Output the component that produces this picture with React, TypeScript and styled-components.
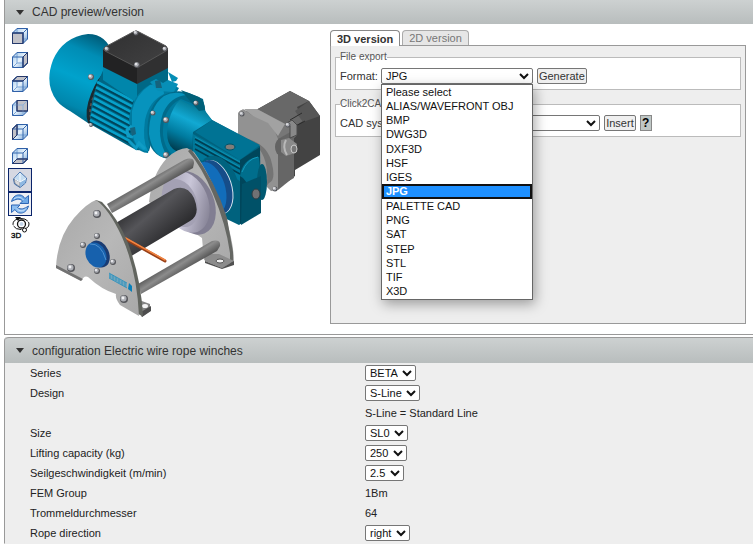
import React, { useState } from 'react';
import styled, { createGlobalStyle, css } from 'styled-components';

const GlobalStyle = createGlobalStyle`
  * { box-sizing: border-box; }
  body {
    margin: 0;
    background: #fff;
    color: #222;
    font: 11px/14px "Liberation Sans", Arial, sans-serif;
  }
  button, select { font: inherit; color: inherit; }
`;

const Page = styled.main`
  display: flex;
  flex-direction: column;
  gap: 2px;
  padding-left: 4px;
  overflow: hidden;
`;

const Section = styled.section<{ $filled?: boolean }>`
  border-left: 1px solid #999;
  border-bottom: 1px solid ${p => (p.$filled ? '#eee' : '#999')};
  background: ${p => (p.$filled ? '#eee' : '#fff')};
  border-top-left-radius: ${p => (p.$filled ? 4 : 0)}px;
`;

const SectionHeader = styled.h2<{ $rounded?: boolean }>`
  display: flex;
  align-items: center;
  gap: 8px;
  height: ${p => (p.$rounded ? 26 : 24)}px;
  margin: 0;
  padding-left: 11px;
  font-size: 12px;
  font-weight: normal;
  color: #333;
  background: linear-gradient(#cdd1d1, #b8bdbd);
  ${p => p.$rounded && css`
    border-top: 1px solid #999;
    border-top-left-radius: 4px;
  `}
`;

const Preview = styled.div`
  display: flex;
  align-items: flex-start;
  min-height: 310px;
  padding: 0 7px 10px 3px;
`;

const Toolbar = styled.div`
  display: flex;
  flex-direction: column;
`;

const ToolButton = styled.button<{ $active?: boolean; $light?: boolean }>`
  display: flex;
  align-items: center;
  justify-content: center;
  width: 24px;
  height: 24px;
  padding: 0;
  border: ${p => (p.$active ? '1px solid #0a246a' : '0')};
  background: ${p => (p.$active ? (p.$light ? '#eef0f5' : '#d6d8e2') : 'transparent')};
`;

const Drawing = styled.svg`
  flex: none;
  width: 280px;
  height: 295px;
  margin: 1px 5px 0 13px;
`;

const Export = styled.div`
  flex: 1;
  display: flex;
  flex-direction: column;
  margin-top: 6px;
`;

const Tabs = styled.div`
  display: flex;
  gap: 2px;
`;

const Tab = styled.button<{ $active?: boolean }>`
  height: 15px;
  padding: 0 6px;
  border: 1px solid #aaa;
  border-bottom: 0;
  border-radius: 4px 4px 0 0;
  background: #e6e6e6;
  color: #777;
  line-height: 14px;
  ${p => p.$active && css`
    position: relative;
    z-index: 1;
    height: 16px;
    margin-bottom: -1px;
    border-color: #888;
    background: #fff;
    color: #333;
    font-weight: bold;
  `}
`;

const TabPanel = styled.div`
  display: flex;
  flex-direction: column;
  gap: 8px;
  min-height: 279px;
  padding: 5px 4px;
  border: 1px solid #999;
  background: #eee;
`;

const Group = styled.fieldset`
  min-width: 0;
  margin: 0;
  padding: 3px 4px 4px;
  border: 1px solid #bbb;
  background: #fff;
`;

const GroupTitle = styled.legend`
  padding: 0;
  color: #555;
  font-size: 10px;
  line-height: 12px;
`;

const Line = styled.div`
  display: flex;
  align-items: center;
  gap: 4px;
  height: 19px;
  color: #333;
`;

const FieldLabel = styled.label`
  margin-right: -1px;
`;

const Picker = styled.select<{ $width?: number }>`
  width: ${p => (p.$width ? p.$width + 'px' : 'auto')};
  height: 16px;
  padding: 0 1px 0 0;
  border: 1px solid #767676;
  border-radius: 2px;
  background-color: #fff;
  color: #111;
`;

const PickerBox = styled.div`
  position: relative;
  display: flex;
`;

const Menu = styled.ul`
  position: absolute;
  z-index: 5;
  top: 16px;
  left: 0;
  display: grid;
  grid-auto-rows: 1fr;
  width: 100%;
  height: 216px;
  margin: 0;
  padding: 0;
  border: 1px solid #666;
  background: #fff;
  box-shadow: 2px 4px 12px rgba(0, 0, 0, 0.35);
  list-style: none;
`;

const MenuItem = styled.li<{ $active: boolean }>`
  display: flex;
  align-items: center;
  padding-left: 4px;
  color: #111;
  ${p => p.$active && css`
    padding-left: 2px;
    border: 2px solid #111;
    background: #1e90ff;
    color: #fff;
    font-weight: bold;
    line-height: 10px;
  `}
`;

const PushButton = styled.button`
  height: 16px;
  padding: 0 1px;
  border: 1px solid #767676;
  border-radius: 2px;
  background: #efefef;
  line-height: 14px;
`;

const HelpButton = styled.button`
  width: 12px;
  height: 16px;
  padding: 0;
  border: 1px solid #888;
  background: #bfc7c5;
  color: #000;
  font-weight: bold;
  font-size: 12px;
  line-height: 14px;
`;

const Settings = styled.div`
  display: flex;
  flex-direction: column;
`;

const Setting = styled.div`
  display: grid;
  grid-template-columns: 335px 1fr;
  align-items: center;
  height: 20px;
  padding-left: 25px;
`;

const formats = ['Please select', 'ALIAS/WAVEFRONT OBJ', 'BMP', 'DWG3D', 'DXF3D', 'HSF', 'IGES', 'JPG',
  'PALETTE CAD', 'PNG', 'SAT', 'STEP', 'STL', 'TIF', 'X3D'];

type SettingData = { label: string; value: string; choice?: boolean };
const settings: SettingData[] = [
  { label: 'Series', value: 'BETA', choice: true },
  { label: 'Design', value: 'S-Line', choice: true },
  { label: '', value: 'S-Line = Standard Line' },
  { label: 'Size', value: 'SL0', choice: true },
  { label: 'Lifting capacity (kg)', value: '250', choice: true },
  { label: 'Seilgeschwindigkeit (m/min)', value: '2.5', choice: true },
  { label: 'FEM Group', value: '1Bm' },
  { label: 'Trommeldurchmesser', value: '64' },
  { label: 'Rope direction', value: 'right', choice: true },
];

const faces: Record<string, string> = {
  Front: '0.5,5 11,5 11,15.5 0.5,15.5',
  Right: '11,5 15.5,0.5 15.5,11 11,15.5',
  Top: '0.5,5 5,0.5 15.5,0.5 11,5',
  Back: '5,0.5 15.5,0.5 15.5,11 5,11',
  Left: '0.5,5 5,0.5 5,11 0.5,15.5',
  Bottom: '0.5,15.5 5,11 15.5,11 11,15.5',
};

function CubeIcon({ face }: { face: string }) {
  const id = 'cube' + face;
  return (
    <svg width="16" height="16" viewBox="0 0 16 16">
      <linearGradient id={id} x1="0" y1="0" x2="1" y2="1">
        <stop offset="0" stopColor="#9cc4e8" />
        <stop offset="0.5" stopColor="#e8f3fc" />
        <stop offset="1" stopColor="#6a9bd0" />
      </linearGradient>
      <polygon points="0.5,5 5,0.5 15.5,0.5 15.5,11 11,15.5 0.5,15.5" fill={`url(#${id})`} />
      <path d="M5 0.5V11H15.5M5 11L0.5 15.5" fill="none" stroke="#7ba5d6" />
      <polygon points={faces[face]} fill="#c2c2c8" stroke="#26396b" />
      <path d="M0.5 5H11V15.5M11 5L15.5 0.5" fill="none" stroke={face === 'Back' ? '#8fb2da' : '#3567ad'} />
      <path d="M5 0.5H15.5V11L11 15.5H0.5V5Z" fill="none" stroke="#2f60a8" />
      <polygon points={faces[face]} fill="none" stroke="#26396b" />
    </svg>
  );
}

function IsoIcon() {
  return (
    <svg width="16" height="18" viewBox="0 0 16 18">
      <polygon points="1.500,8 8,1 14.500,7 13.500,12 8,16.500 2.500,13" fill="#d8eaf8" stroke="#3c6cac" />
      <polygon points="8,1.500 14,7.500 8,11 2,8" fill="#c4dcf1" />
      <polygon points="2,8 8,11 8,16 3,12.500" fill="#d9d9dc" stroke="#6a7890" strokeWidth="0.800" />
      <polygon points="8,11 14,7.500 13,12 8,16" fill="#8fb8e2" />
      <path d="M8 2V11M8 11L3 8M8 11L14 7.500" stroke="#f4faff" fill="none" />
    </svg>
  );
}

function RefreshIcon() {
  return (
    <svg width="20" height="22" viewBox="0 0 20 22" strokeLinejoin="round">
      <path d="M1.500 8.500C3 3 7 1.500 10 2C12 2 14 4 15 5.500L18.500 2.500V10.500H10L12.500 8C9.500 5 6 6 1.500 8.500Z" fill="#6fa9e6" stroke="#2d65b4" />
      <path d="M18.500 13C17 18.500 13 20.500 10 20C8 20 6 18.500 5 16.500L1.500 19.500V12H10L7.500 14.500C10.500 17 14 16 18.500 13Z" fill="#8cbdf0" stroke="#2d65b4" />
      <path d="M4 6C7 3.500 11 3.500 13.500 7M15.500 16C13 18.500 9 18.500 7 15.500" fill="none" stroke="#c9e2fa" />
    </svg>
  );
}

function RotateIcon() {
  return (
    <svg width="20" height="24" viewBox="0 0 20 24">
      <g fill="none" stroke="#111">
        <ellipse cx="11" cy="8" rx="8" ry="5.500" strokeDasharray="9 1" />
        <circle cx="11.500" cy="8" r="4" strokeWidth="1.300" fill="#fff" />
        <circle cx="14.500" cy="14" r="2" fill="#fff" />
      </g>
      <path d="M5 1L11 1L8 5Z" fill="#111" />
      <circle cx="11.500" cy="8" r="2" fill="#c5d6ea" />
      <text x="1" y="22" fontSize="8" fill="#000" stroke="#000" strokeWidth="0.300">3D</text>
    </svg>
  );
}

function Bolt({ x, y, r = 3 }: { x: number; y: number; r?: number }) {
  return (
    <g>
      <circle cx={x} cy={y} r={r} fill="#55565b" />
      <circle cx={x - 0.5} cy={y - 0.5} r={r * 0.75} fill="#aeb0b6" />
      <circle cx={x - 1} cy={y - 1} r={r * 0.35} fill="#f1f1f3" />
    </g>
  );
}

function Winch() {
  const fins = [0, 1, 2, 3, 4, 5, 6, 7];
  return (
    <Drawing viewBox="45 25 280 295" role="img" aria-label="Electric wire rope winch">
      <defs>
        <linearGradient id="cowl" x1="0.650" y1="0" x2="0.350" y2="1">
          <stop offset="0" stopColor="#005f7d" />
          <stop offset="0.200" stopColor="#008db5" />
          <stop offset="0.500" stopColor="#00a2cc" />
          <stop offset="0.800" stopColor="#0087ad" />
          <stop offset="1" stopColor="#00536e" />
        </linearGradient>
        <linearGradient id="pipe" x1="0.700" y1="0" x2="0.300" y2="1">
          <stop offset="0" stopColor="#00677f" />
          <stop offset="0.400" stopColor="#12a9d3" />
          <stop offset="0.700" stopColor="#007b9f" />
          <stop offset="1" stopColor="#003b4d" />
        </linearGradient>
        <linearGradient id="drum" x1="0.200" y1="0.200" x2="0.800" y2="0.800">
          <stop offset="0" stopColor="#2b2b2d" />
          <stop offset="0.350" stopColor="#555559" />
          <stop offset="1" stopColor="#1c1c1e" />
        </linearGradient>
        <linearGradient id="rod" x1="0.400" y1="0.400" x2="0.600" y2="0.600">
          <stop offset="0" stopColor="#5a5a5a" />
          <stop offset="0.400" stopColor="#8c8c8c" />
          <stop offset="1" stopColor="#484848" />
        </linearGradient>
        <linearGradient id="disc" x1="0" y1="0" x2="1" y2="1">
          <stop offset="0" stopColor="#9390a4" />
          <stop offset="0.500" stopColor="#c9c6d8" />
          <stop offset="1" stopColor="#6e6b7e" />
        </linearGradient>
        <linearGradient id="plate" x1="0" y1="0" x2="1" y2="1">
          <stop offset="0" stopColor="#a8a8a8" />
          <stop offset="0.500" stopColor="#b8b8b8" />
          <stop offset="1" stopColor="#a8a8a8" />
        </linearGradient>
        <linearGradient id="lid" x1="0" y1="0" x2="1" y2="1">
          <stop offset="0" stopColor="#303031" />
          <stop offset="1" stopColor="#414142" />
        </linearGradient>
      </defs>

      {/* limit switch housing */}
      <path d="M256 110L290 91L309 101L320 116V155L295 170V176L276 190L262 140Z" fill="#434343" />
      <path d="M256 110L290 91L309 101L297 107L303 121L282 134L270 121Z" fill="#686868" />
      <path d="M309 101L320 116L303 122L295 111Z" fill="#565656" />
      <path d="M290 120L302 113M294 127L305 121" stroke="#2c2c2c" />
      <path d="M238 115Q239 108 247 111L257 109L286 124L292 122L297 128V135L294 138V178L276 188Z" fill="#777" />
      <path d="M238 113L243 109L253 116Q265 117 274 129L278 139V190L271 191L266 186V158L238 137Z" fill="#929292" />
      <path d="M244 109L257 109L285 124L278 136L268 123L253 116Z" fill="#a2a2a2" />
      <path d="M278 139L294 130V177L278 190Z" fill="#666" />
      <path d="M287 123L292 120L297 125V135L290 138V126Z" fill="#888" stroke="#4a4a4a" />
      <path d="M244 138Q268 143 272 164Q276 180 269 183L258 196L250 150Z" fill="#747474" />
      <path d="M250 142Q269 151 267 184L258 188Z" fill="#939393" />
      <ellipse cx="281" cy="147" rx="6" ry="9" fill="#636363" />
      <path d="M281 140L289 138L297 144L295 153L286 156L281 152Z" fill="#8a8a8a" />
      <path d="M286 140Q282 147 287 155" stroke="#b9b9b9" strokeWidth="2" fill="none" />
      <ellipse cx="294" cy="149" rx="3" ry="4" fill="#777" stroke="#ccc" />
      <Bolt x={242} y={114} r={2.5} /><Bolt x={288} y={125} r={2.5} /><Bolt x={275} y={189} r={2.5} />

      {/* motor cowl */}
      <path d="M113 55Q107 34 88 34Q63 37 53 60Q44 84 57 101Q61 106 70 111L91 125L97 102L111 78Z" fill="url(#cowl)" />
      <path d="M88 123Q84 111 91 94Q97 78 108 68L115 80L98 126Z" fill="#1a2a31" />
      <path d="M91 118Q88 108 96 91" stroke="#604a45" strokeWidth="2" strokeDasharray="3 3" fill="none" />

      {/* finned stator */}
      <path d="M98 82L105 66L142 82L165 95L149 151L136 150L90 124Q90 101 98 82Z" fill="#006684" />
      {fins.map(i => (
        <g key={i}>
          <path d={`M${97 - i} ${82 + i * 5.4}L${133 - i * 0.5} ${101 + i * 5.7}`} stroke="#07a1ca" strokeWidth="2.600" />
          <path d={`M${97 - i} ${84.5 + i * 5.4}L${133 - i * 0.5} ${103.500 + i * 5.7}`} stroke="#004359" strokeWidth="1.500" />
        </g>
      ))}
      <path d="M103 66L137 82V103L103 80Z" fill="#0086ab" />
      <path d="M137 82L168 66V88L151 95L137 106Z" fill="#006886" />

      {/* motor flanges */}
      <path d="M129 119Q132 94 151 84L163 88L169 83L179 88L171 102L158 105L148 153Q132 153 129 119Z" fill="#007a9f" />
      <path d="M132 111Q136 94 150 85Q164 84 164 94Q149 101 145 120Q142 141 148 151Q136 151 132 133Z" fill="#0793bd" />
      <path d="M132 126L127 130L128 136L133 137M129 141L136 148L139 143L145 149" stroke="#0f9cc5" strokeWidth="3" fill="none" />
      <path d="M150 82L156 79L163 83L168 80L178 84L174 92L158 91Z" fill="#078fb7" />
      <path d="M155 81L160 80L162 88L156 88ZM130 128L135 127L136 134L132 136Z" fill="#16637d" />
      <path d="M168 72L178 78L176 81L172 82Z" fill="#058db5" />
      <path d="M148 139Q145 111 159 98Q173 88 189 93L203 99L207 119L191 154L172 159Q153 159 148 139Z" fill="#006b8b" />
      <path d="M149 134Q149 107 164 96Q175 90 187 95Q171 96 163 113Q155 137 168 158Q153 158 149 134Z" fill="#0793bc" />
      <path d="M163 135Q162 108 181 99L203 108L212 120L205 151L184 160Q166 157 163 135Z" fill="#007b9f" />
      <path d="M180 100L205 112L212 120L199 150L181 153Q162 148 169 120Q173 106 180 100Z" fill="url(#pipe)" />
      <path d="M181 90L199 97Q205 101 205 110L199 111L189 100Z" fill="#006078" />
      <Bolt x={91} y={77} /><Bolt x={91} y={125} r={2} /><Bolt x={153} y={113} r={2.5} />
      <Bolt x={166} y={120} /><Bolt x={166} y={155} /><Bolt x={196} y={103} r={2.5} />

      {/* terminal box */}
      <path d="M103 49L137 66V84L103 67Z" fill="#222223" />
      <path d="M137 66L168 48V68L137 84Z" fill="#303031" />
      <path d="M105 47L133 32Q136 30 139 32L166 46Q169 49 166 51L140 66Q137 68 134 66L105 51Q102 49 105 47Z" fill="url(#lid)" stroke="#555" />
      <Bolt x={136} y={33} r={2.5} /><Bolt x={107} y={49} r={2.5} /><Bolt x={165} y={49} r={2.5} /><Bolt x={137} y={65} r={3} />

      {/* worm gearbox */}
      <path d="M193 132L212 120L260 146L261 211L239 225L210 211L192 151Z" fill="#00627e" />
      <path d="M195 132L212 120L260 145L240 160Z" fill="#007394" />
      <path d="M193 134L240 160V181L193 156Z" fill="#007798" />
      <path d="M195 139L240 164M195 144L240 169M195 149L240 174" stroke="#003e51" strokeWidth="1.500" />
      <path d="M195 137L240 162M195 142L240 167" stroke="#0d8fb0" />
      <path d="M240 160L260 147V210L240 224Z" fill="#00465b" />
      <path d="M240 176Q243 158 259 157L261 178L251 188L243 178Z" fill="#006e8c" />
      <path d="M242 172Q247 159 258 157" stroke="#139bbd" fill="none" />
      <ellipse cx="262" cy="182" rx="5" ry="18" fill="#005a72" />
      <path d="M242 184L261 176V213L241 225Z" fill="#005168" />
      <ellipse cx="230" cy="147" rx="5" ry="3" fill="#817d79" stroke="#005269" />
      <ellipse cx="256" cy="194" rx="4" ry="5" fill="#707174" stroke="#303c42" />
      <ellipse cx="218" cy="185" rx="20" ry="30" transform="rotate(-18 218 185)" fill="#00637f" />
      <ellipse cx="216" cy="187" rx="16" ry="28" transform="rotate(-18 216 187)" fill="#d6e4ef" />
      <ellipse cx="215" cy="187" rx="16" ry="28" transform="rotate(-18 215 187)" fill="#164d89" />
      <ellipse cx="210" cy="188" rx="15" ry="27" transform="rotate(-18 210 188)" fill="#126dba" />

      {/* rear side plate */}
      <path d="M149 202Q152 174 167 158Q178 148 187 148L194 152Q211 175 224 213Q234 242 234 262L222 268L204 260L202 238Z" fill="url(#plate)" />
      <path d="M191 149Q216 182 227 218L233 252V264L230 264V253Q226 224 213 194Q202 167 188 151Z" fill="#656763" />
      <path d="M204 254L219 254L234 261L222 268L205 261Z" fill="#8c8c8c" />
      <path d="M205 261L222 268L234 261V265L222 269L205 263Z" fill="#505050" />
      <ellipse cx="220" cy="261" rx="4" ry="2" fill="#f0f0f0" stroke="#555" />

      {/* drum with flange disc */}
      <ellipse cx="192" cy="203" rx="22" ry="33" transform="rotate(-22 192 203)" fill="#817e92" />
      <ellipse cx="186" cy="202" rx="22" ry="32" transform="rotate(-22 186 202)" fill="url(#disc)" />
      <ellipse cx="180" cy="203" rx="17" ry="25" transform="rotate(-22 180 203)" fill="#a4a1b4" />
      <path d="M114 224L174 189Q187 184 194 198Q201 215 190 221L128 258Z" fill="url(#drum)" />
      <path d="M107 204L184 160Q194 156 194 163L193 168L112 213Z" fill="url(#rod)" />
      <path d="M138 284L212 241Q221 239 220 246L217 251L141 294Z" fill="url(#rod)" />
      <path d="M122 237L165 261" stroke="#994018" strokeWidth="3" strokeLinecap="round" />
      <path d="M122 236L165 260" stroke="#f38440" strokeWidth="1.500" strokeLinecap="round" />

      {/* front side plate */}
      <path d="M139 300L150 304V311L142 317L136 310Z" fill="#858585" />
      <path d="M142 317L151 311V306L141 312Z" fill="#4d4d4d" />
      <ellipse cx="145" cy="306" rx="3" ry="2" fill="#f5f5f5" />
      <path d="M96 200L102 202Q118 218 128 243Q141 278 143 316L138 314L93 204Z" fill="#62655f" />
      <path d="M56 268Q57 238 74 218Q87 203 96 200Q109 209 122 237Q137 271 139 316L120 305Q115 298 116 294Q102 290 88 277Q84 275 81 281Z" fill="url(#plate)" />
      <path d="M56 268L81 281L83 279L56 265Z" fill="#727272" />
      <ellipse cx="99" cy="254" rx="10" ry="14" transform="rotate(-24 99 254)" fill="#1a3c73" />
      <ellipse cx="96" cy="255" rx="10" ry="13" transform="rotate(-24 96 255)" fill="#1761ad" />
      <path d="M90 244Q101 243 106 260" stroke="#4e91d0" fill="none" />
      <Bolt x={97} y={214} r={4} /><Bolt x={97} y={236} /><Bolt x={83} y={245} /><Bolt x={113} y={262} />
      <Bolt x={97} y={271} /><Bolt x={71} y={268} r={4} /><Bolt x={124} y={299} r={4} />
      <path d="M109 273L127 283V288L109 278Z" fill="#6fa6bf" />
      <path d="M109 273L127 283M109 278L127 288M110 274V278M113 275V280M116 277V281M119 279V283M122 281V285M125 282V287" stroke="#268fbd" strokeWidth="0.800" />
      <path d="M129 283L132 286V292L128 289Z" fill="#087fb8" />
    </Drawing>
  );
}

function Triangle() {
  return (
    <svg width="8" height="5" viewBox="0 0 8 5" aria-hidden="true">
      <path d="M0 0H8L4 5Z" fill="#333" />
    </svg>
  );
}

export default function App() {
  const [format, setFormat] = useState('JPG');
  return (
    <>
      <GlobalStyle />
      <Page>
        <Section>
          <SectionHeader><Triangle />CAD preview/version</SectionHeader>
          <Preview>
            <Toolbar>
              {['Front', 'Right', 'Top', 'Back', 'Left', 'Bottom'].map(face => (
                <ToolButton key={face} aria-label={face + ' view'}><CubeIcon face={face} /></ToolButton>
              ))}
              <ToolButton $active aria-label="Isometric view"><IsoIcon /></ToolButton>
              <ToolButton $active $light aria-label="Refresh"><RefreshIcon /></ToolButton>
              <ToolButton aria-label="Rotate in 3D"><RotateIcon /></ToolButton>
            </Toolbar>
            <Winch />
            <Export>
              <Tabs role="tablist">
                <Tab role="tab" aria-selected $active>3D version</Tab>
                <Tab role="tab" aria-selected={false}>2D version</Tab>
              </Tabs>
              <TabPanel role="tabpanel">
                <Group>
                  <GroupTitle>File export</GroupTitle>
                  <Line>
                    <FieldLabel htmlFor="format">Format:</FieldLabel>
                    <PickerBox>
                      <Picker id="format" $width={152} value={format} onChange={e => setFormat(e.target.value)}>
                        {formats.map(f => <option key={f}>{f}</option>)}
                      </Picker>
                      <Menu role="listbox" aria-label="Format">
                        {formats.map(f => (
                          <MenuItem key={f} role="option" aria-selected={f === format} $active={f === format}
                            onClick={() => setFormat(f)}>{f}</MenuItem>
                        ))}
                      </Menu>
                    </PickerBox>
                    <PushButton>Generate</PushButton>
                  </Line>
                </Group>
                <Group>
                  <GroupTitle>Click2CAD</GroupTitle>
                  <Line>
                    <FieldLabel htmlFor="cad">CAD system:</FieldLabel>
                    <Picker id="cad" $width={193}><option></option></Picker>
                    <PushButton>Insert</PushButton>
                    <HelpButton aria-label="Help">?</HelpButton>
                  </Line>
                </Group>
              </TabPanel>
            </Export>
          </Preview>
        </Section>
        <Section $filled>
          <SectionHeader $rounded><Triangle />configuration Electric wire rope winches</SectionHeader>
          <Settings>
            {settings.map((s, i) => (
              <Setting key={i}>
                {s.choice ? <label htmlFor={'setting' + i}>{s.label}</label> : <span>{s.label}</span>}
                <div>
                  {s.choice
                    ? <Picker id={'setting' + i} defaultValue={s.value}><option>{s.value}</option></Picker>
                    : s.value}
                </div>
              </Setting>
            ))}
          </Settings>
        </Section>
      </Page>
    </>
  );
}
